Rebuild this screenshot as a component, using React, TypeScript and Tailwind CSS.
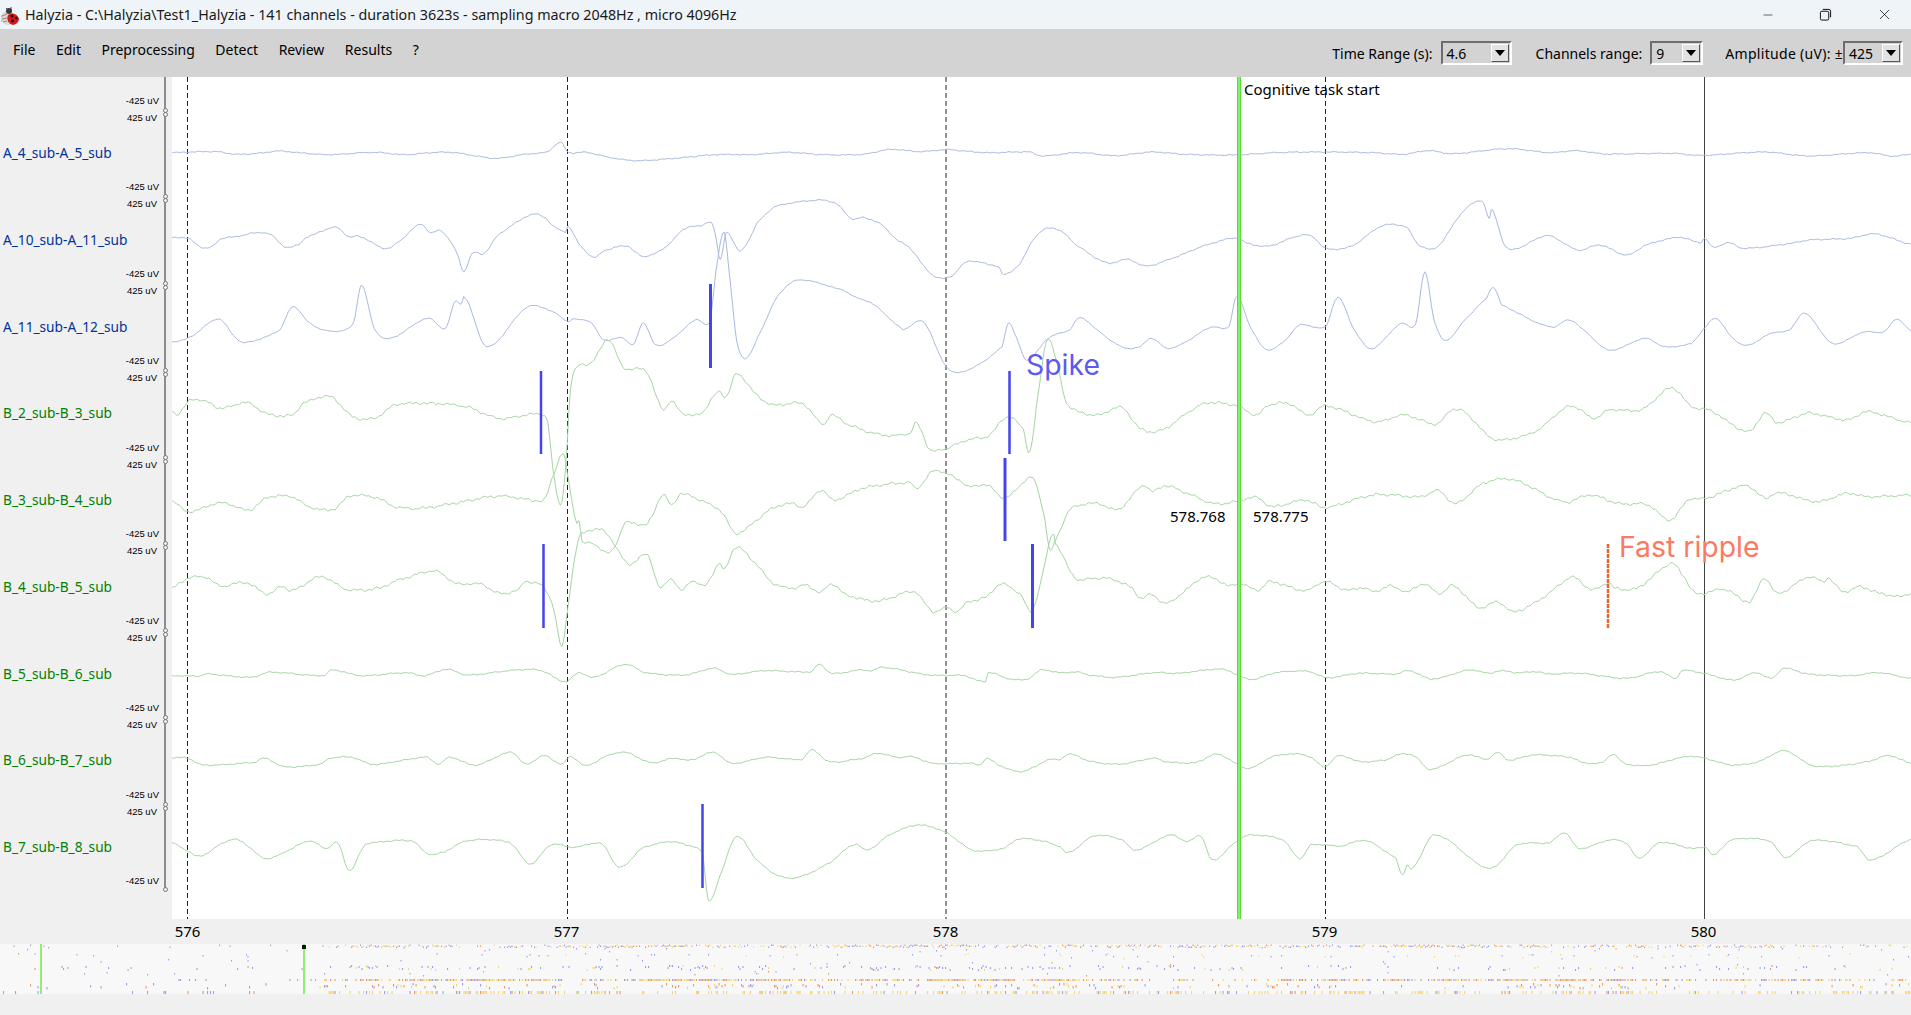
import { Minus, X } from 'lucide-react';

type Pt = [number, number];

// screen positions were read off zoomed crops, so each block of points has its own scale
const zones = {
    a: [160, 1.96, 120],
    b: [950, 1.632, 120],
    c: [160, 1.742, 500],
    d: [1050, 1.821, 500],
} as const;

function pts(zone: keyof typeof zones, s: string): Pt[] {
    const [ox, sx, oy] = zones[zone];
    return s.trim().split(/\s+/).map((p) => {
        const [x, y] = p.split(',').map(Number);
        return [ox + x / sx, oy + y / 3] as Pt;
    });
}

const blueTraces: Pt[][] = [
    [
        ...pts('a', '24,98 60,96 110,95 150,103 200,99 232,93 270,98 330,104 420,97 480,104 540,97 580,98 610,106 660,115 710,104 760,95 785,67 800,97 835,97 880,112 930,122 1000,116 1090,104 1160,104 1230,97 1300,104 1380,103 1430,88 1490,95 1540,89 1568,92'),
        ...pts('b', '60,98 130,96 150,108 210,98 270,107 330,96 380,103 465,105 530,98 610,96 690,98 740,103 780,92 820,101 910,86 980,98 1020,92 1070,102 1180,100 1225,106 1330,96 1400,108 1500,98 1540,109 1568,102'),
    ],
    [
        ...pts('a', '24,353 55,355 80,381 100,381 120,356 150,350 180,340 215,342 245,380 270,375 285,353 345,322 370,350 392,350 440,385 465,368 510,313 530,338 550,332 570,365 585,410 595,455 612,400 635,400 660,350 690,315 730,283 755,293 770,318 795,335 800,318 820,370 850,412 870,392 915,378 940,405 955,408 990,382 1030,325 1060,318 1080,306 1088,340 1098,420 1110,337 1135,392 1150,370 1170,310 1205,260 1285,241 1325,250 1355,295 1380,293 1415,315 1445,360 1470,385 1505,452 1530,475 1555,465 1568,442'),
        ...pts('b', '30,423 70,435 80,442 87,464 115,430 135,360 160,324 185,338 205,375 255,428 290,418 320,438 370,410 410,380 465,354 485,370 520,378 565,350 590,348 613,385 655,378 705,318 745,322 765,375 795,380 835,280 868,242 880,295 885,270 905,375 925,385 975,347 1025,390 1060,375 1105,405 1135,375 1190,352 1225,368 1232,355 1245,382 1270,368 1295,385 1375,370 1400,360 1470,355 1510,342 1568,372'),
    ],
    [
        ...pts('a', '24,666 60,650 115,597 150,655 170,667 235,630 260,560 290,605 320,630 358,632 380,605 395,495 420,625 450,655 525,595 560,625 578,545 590,553 598,534 640,680 720,562 775,578 800,605 810,597 845,608 870,660 905,652 928,673 947,608 970,673 1000,660 1050,600 1078,605 1090,450 1105,335 1115,450 1130,660 1148,715 1175,640 1210,530 1250,480 1340,510 1360,530 1400,555 1450,620 1462,625 1490,602 1505,625 1530,710 1548,750 1568,757'),
        ...pts('b', '50,730 85,680 95,610 105,640 125,720 160,655 195,630 212,593 240,630 270,670 290,685 310,680 328,655 355,685 385,665 425,622 455,620 468,530 490,620 515,688 545,665 570,615 613,620 633,532 660,630 688,686 735,612 760,612 775,456 790,600 808,662 840,600 875,537 887,502 900,555 980,620 1010,600 1030,625 1075,690 1135,655 1165,680 1210,670 1230,628 1250,595 1275,650 1300,676 1340,640 1370,630 1395,580 1440,670 1490,637 1525,635 1545,597 1568,632'),
    ],
];

const greenTraces: Pt[][] = [
    [
        ...pts('a', '24,875 35,882 60,840 90,845 120,865 170,848 210,882 260,885 280,850 335,830 375,888 420,895 460,855 520,850 600,860 665,895 740,882 760,905 770,1050 785,1155 795,1040 805,800 820,735 845,730 878,660 910,745 952,752 985,865 1002,845 1025,880 1060,880 1095,815 1110,830 1130,762 1170,825 1200,855 1260,852 1300,912 1315,885 1350,915 1415,945 1470,940 1483,910 1510,990 1568,970'),
        ...pts('b', '35,955 60,950 95,890 120,930 130,995 145,810 158,660 170,700 190,850 240,885 280,862 310,925 345,930 400,865 425,848 470,858 500,885 520,855 555,852 585,885 613,858 695,905 740,885 795,912 820,868 845,885 880,950 910,958 960,930 1000,870 1020,860 1050,895 1075,870 1130,868 1178,803 1210,860 1240,872 1303,935 1330,880 1350,908 1400,880 1465,900 1495,875 1568,908'),
    ],
    [
        ...pts('a', '24,1143 55,1175 120,1148 175,1170 210,1133 260,1130 290,1160 340,1168 372,1128 425,1133 460,1160 510,1165 575,1150 665,1128 740,1142 755,1135 772,1060 790,1000 798,1060 815,1200'),
        ...pts('c', '730,60 735,125 755,130 780,160 795,130 810,70 845,75'),
        ...pts('a', '960,1200 985,1125 1003,1155 1020,1122 1060,1140 1085,1160 1100,1175'),
        ...pts('c', '1003,100 1040,60'),
        ...pts('a', '1200,1165 1240,1150 1262,1160 1295,1110 1320,1140 1375,1105 1470,1088 1483,1105 1518,1052 1568,1080'),
        ...pts('b', '30,1100 60,1095 90,1133 133,1072 145,1120 155,1200'),
        ...pts('c', '1550,150'),
        ...pts('d', '8,125'),
        ...pts('b', '195,1170 240,1150 275,1168 315,1097 330,1115 350,1097 380,1115 430,1150 465,1145 500,1132 525,1160 580,1140 612,1162 690,1125 770,1130 797,1112 825,1150 870,1090 920,1080 1000,1145 1045,1125 1090,1150 1140,1155 1175,1200 1205,1140 1232,1135 1300,1097 1330,1135 1350,1118 1415,1145 1465,1120 1495,1130 1568,1125'),
    ],
    [
        ...pts('c', '20,265 48,235 80,232 105,258 150,248 188,282 212,258 230,272 280,230 325,268 380,265 415,240 480,213 515,250 560,252 590,280 625,270 635,245 668,260 685,320 700,440 712,300 725,150 735,100 775,95 815,190 850,165 870,262 890,235 908,272 925,243 950,255 975,190 982,210 1003,142 1040,195 1068,250 1105,265 1125,255 1150,277 1170,252 1195,285 1250,303 1315,275 1340,325 1352,335 1370,322 1388,335 1405,308 1440,290 1465,252 1500,285 1518,335 1535,240 1555,100'),
        ...pts('d', '10,130 45,232 80,235 115,238 150,265 165,295 185,283 210,310 240,280 275,235 300,235 325,258 345,250 380,270 400,245 465,272 500,245 540,270 570,263 590,275 620,258 650,275 680,252 710,280 735,258 780,322 815,305 845,335 900,290 952,232 985,270 1015,250 1030,265 1070,263 1130,192 1150,220 1175,280 1230,268 1275,305 1300,235 1325,280 1380,232 1410,245 1415,232 1445,275 1475,260 1500,275 1545,290 1568,280'),
    ],
    [
        ...pts('c', '20,527 70,528 80,522 160,532 190,517 285,527 300,510 350,527 430,518 460,527 500,508 535,525 620,510 665,512 705,545 730,518 755,532 810,493 845,518 915,525 965,505 995,523 1050,512 1135,515 1148,493 1170,520 1220,510 1240,512 1258,502 1340,525 1400,527 1438,545 1443,517 1475,535 1510,538 1535,510 1568,518'),
        ...pts('d', '50,516 70,525 120,532 190,518 230,520 315,508 365,538 410,518 470,514 505,533 560,520 630,522 655,512 695,537 765,510 800,520 820,512 850,518 890,515 905,522 965,520 1050,535 1110,515 1140,535 1150,512 1190,520 1245,540 1285,518 1315,535 1335,505 1380,522 1460,527 1510,518 1568,535'),
    ],
    [
        ...pts('c', '20,773 48,775 75,795 165,787 183,775 215,800 280,793 295,775 335,772 370,793 420,782 465,772 485,792 505,772 550,795 612,757 638,793 668,767 700,792 715,770 742,797 775,770 810,757 855,788 895,775 925,780 965,757 995,790 1055,772 1118,778 1136,750 1165,785 1225,775 1250,760 1285,772 1310,770 1345,790 1415,790 1428,795 1440,775 1460,795 1497,815 1525,800 1545,780 1568,778'),
        ...pts('d', '35,762 75,785 130,792 190,775 210,785 265,788 305,763 360,805 405,770 450,762 475,772 500,800 525,767 565,785 610,780 640,762 665,770 692,808 760,765 795,778 815,758 835,780 880,765 950,772 970,788 1005,788 1025,763 1045,790 1090,796 1160,770 1195,776 1240,795 1290,785 1338,752 1385,795 1430,798 1490,785 1528,767 1568,790'),
    ],
    [
        ...pts('c', '20,1028 45,1050 70,1068 115,1025 140,1023 183,1075 225,1050 260,1023 290,1045 310,1030 330,1112 355,1040 370,1028 440,1023 465,1060 490,1058 535,1022 610,1028 645,1092 680,1035 720,1042 770,1032 800,1102 840,1045 890,1025 915,1035 945,1060 955,1200 975,1130 1003,1010 1040,1080 1075,1125 1110,1132 1165,1090 1210,1033 1232,1050 1270,1005 1320,975 1370,998 1415,1050 1470,1045 1495,1017 1535,1022 1568,1040'),
        ...pts('d', '33,1058 80,1008 130,1018 155,1050 220,1005 250,1025 275,1008 295,1080 340,1025 365,1005 425,1020 455,1075 475,1035 530,1038 575,1022 630,1075 642,1125 650,1095 660,1105 700,1005 800,1105 850,1035 910,1028 938,998 962,1045 1020,1020 1050,1030 1072,1075 1110,1028 1170,1045 1195,1042 1208,1065 1240,1020 1310,1022 1340,1072 1385,1022 1470,1040 1495,1080 1568,1018'),
    ],
];

const blueNoise = [0.5, 0.6, 0.4];
const greenNoise = [1.3, 1.3, 1.3, 0.6, 0.6, 0.6];

function makeRand(seed: number) {
    let s = seed;
    return () => {
        s = (s * 1664525 + 1013904223) % 4294967296;
        return s / 4294967296;
    };
}

// smooth the hand-read points and add a bit of signal noise
function tracePath(raw: Pt[], noise: number, seed: number) {
    const rand = makeRand(seed);
    const p: Pt[] = [];
    for (const q of raw) {
        if (p.length === 0 || q[0] > p[p.length - 1][0]) p.push(q);
    }
    let d = `M${p[0][0].toFixed(1)} ${p[0][1].toFixed(1)}`;
    for (let i = 0; i < p.length - 1; i++) {
        const p0 = p[Math.max(i - 1, 0)];
        const p1 = p[i];
        const p2 = p[i + 1];
        const p3 = p[Math.min(i + 2, p.length - 1)];
        const n = Math.max(1, Math.ceil((p2[0] - p1[0]) / 1.5));
        for (let j = 1; j <= n; j++) {
            const t = j / n;
            const t2 = t * t;
            const t3 = t2 * t;
            const x = p1[0] + (p2[0] - p1[0]) * t;
            const y = 0.5 * (2 * p1[1] + (p2[1] - p0[1]) * t + (2 * p0[1] - 5 * p1[1] + 4 * p2[1] - p3[1]) * t2 + (3 * p1[1] - p0[1] - 3 * p2[1] + p3[1]) * t3);
            const wiggle = noise * (0.5 * Math.sin(x * 0.83 + seed) + 0.5 * Math.sin(x * 0.31 + seed * 2) + (rand() - 0.5) * 0.6);
            d += `L${x.toFixed(1)} ${(y + wiggle).toFixed(1)}`;
        }
    }
    return d;
}

const gridLines = [187.5, 567.5, 946, 1325.5];
const spikes = [
    [710.5, 284, 368, 3],
    [541, 371, 454, 2.5],
    [1009.5, 371, 454, 2.5],
    [1005, 458, 541, 3],
    [543.5, 544, 628, 2.5],
    [1032.5, 544, 628, 3],
    [702.5, 804, 888, 2.5],
];

const channels = [
    { name: 'A_4_sub-A_5_sub', color: 'text-[#003399]' },
    { name: 'A_10_sub-A_11_sub', color: 'text-[#003399]' },
    { name: 'A_11_sub-A_12_sub', color: 'text-[#003399]' },
    { name: 'B_2_sub-B_3_sub', color: 'text-[#008000]' },
    { name: 'B_3_sub-B_4_sub', color: 'text-[#008000]' },
    { name: 'B_4_sub-B_5_sub', color: 'text-[#008000]' },
    { name: 'B_5_sub-B_6_sub', color: 'text-[#008000]' },
    { name: 'B_6_sub-B_7_sub', color: 'text-[#008000]' },
    { name: 'B_7_sub-B_8_sub', color: 'text-[#008000]' },
];

type DotRow = { y: number; spread: number; h: number; density: (x: number) => number; mix: [number, number] };

// overview strip: one row of detections per category, density read from the picture
function overviewDots() {
    const rand = makeRand(77);
    const out = { purple: '', orange: '', yellow: '' };
    const rows: DotRow[] = [
        { y: 945.5, spread: 1, h: 1.4, density: (x) => (x < 310 ? 0.07 : x < 350 ? 0.25 : x < 1660 ? 0.85 : 0.6), mix: [0.4, 0.22] },
        { y: 949, spread: 2, h: 1.4, density: (x) => (x < 360 ? 0.015 : 0.03), mix: [0.8, 0.05] },
        { y: 955, spread: 2, h: 1.4, density: (x) => (x < 480 ? 0.035 : 0.07), mix: [0.55, 0.05] },
        { y: 961, spread: 3, h: 1.4, density: (x) => (x < 500 ? 0.025 : 0.02), mix: [0.9, 0.05] },
        { y: 967, spread: 2, h: 2, density: (x) => (x < 310 ? 0.06 : x < 350 ? 0.2 : x < 1150 ? 0.32 : 0.18), mix: [0.72, 0.03] },
        { y: 973, spread: 2, h: 1.4, density: (x) => (x < 500 ? 0.02 : 0.02), mix: [0.6, 0.3] },
        { y: 979, spread: 0, h: 2, density: (x) => (x < 280 ? 0.04 : x < 360 ? 0.3 : x < 1150 ? 0.92 : x < 1280 ? 0.2 : x < 1670 ? 0.88 : 0.55), mix: [0.2, 0.42] },
        { y: 985, spread: 2, h: 2.5, density: (x) => (x < 310 ? 0.07 : x < 1150 ? 0.3 : x < 1680 ? 0.22 : 0.12), mix: [0.38, 0.32] },
        { y: 991, spread: 0, h: 3, density: (x) => (x < 320 ? 0.07 : 0.42), mix: [0.16, 0.08] },
    ];
    for (const r of rows) {
        for (let x = 0; x < 1911; x += 1.5) {
            // detections come in bursts, not evenly
            const burst = 0.75 + 0.25 * Math.sin(x * 0.11 + r.y) + 0.2 * Math.sin(x * 0.023 + r.y * 2);
            if (rand() > r.density(x) * burst) continue;
            const c = rand();
            // the start of the recording has almost only purple marks
            const purple = x < 310 ? 0.8 : r.mix[0];
            const orange = x < 310 ? 0.2 : r.mix[1];
            const key = c < purple ? 'purple' : c < purple + orange ? 'orange' : 'yellow';
            const y = r.y + Math.round(rand() * r.spread * 2) - r.spread;
            out[key] += `M${x.toFixed(1)} ${y}h1.1v${r.h}h-1.1z`;
        }
    }
    return out;
}

function Ladybug() {
    return (
        <svg viewBox="0 0 20 20" className="w-5 h-5 shrink-0">
            <path d="M6 3 L8 5 M11 2 L11 5 M1 11 L3 12 M1 16 L3 15" stroke="#555" strokeWidth="1" />
            <circle cx="8" cy="13" r="7" fill="#d8d8d8" />
            <path d="M2 11 L7 9 M2 14 L7 13 M3 17 L7 16" stroke="#b08080" strokeWidth="1" />
            <circle cx="9" cy="6" r="3" fill="#3a3a3a" />
            <path d="M8 10 A 7 7 0 0 1 19 14 A 6.5 6.5 0 0 1 13 20 A 7 7 0 0 1 8 10 Z" fill="#d81818" />
            <circle cx="12" cy="11" r="1.4" fill="#111" />
            <circle cx="16.5" cy="13" r="1.3" fill="#111" />
            <circle cx="12.5" cy="16" r="1.4" fill="#111" />
        </svg>
    );
}

function Combo({ value, width }: { value: string; width: string }) {
    return (
        <div className={`${width} h-6 border-2 border-t-[#6e6e6e] border-l-[#6e6e6e] border-r-white border-b-white flex items-center justify-between pl-1 pr-px`}>
            <span className="text-[14px] text-black">{value}</span>
            <span className="w-[18px] h-[18px] bg-[#e2e2e2] border border-t-white border-l-white border-r-[#555] border-b-[#555] flex items-center justify-center">
                <span className="w-0 h-0 border-x-[5px] border-x-transparent border-t-[6px] border-t-black" />
            </span>
        </div>
    );
}

export default function App() {
    const dots = overviewDots();
    return (
        <div className="w-full h-[1015px] overflow-hidden flex flex-col bg-[#f0f0f0] text-black font-['Noto_Sans',sans-serif]">
            {/* title bar */}
            <div className="h-[29px] shrink-0 bg-[#eff4f9] flex items-center justify-between">
                <div className="flex items-center gap-[5px]">
                    <Ladybug />
                    <span className="text-[14.3px] text-[#1a1a1a] whitespace-nowrap">Halyzia - C:\Halyzia\Test1_Halyzia - 141 channels - duration 3623s - sampling macro 2048Hz , micro 4096Hz</span>
                </div>
                <div className="flex items-center gap-[44px] pr-[18px] text-black">
                    <Minus size={14} strokeWidth={1} />
                    <svg viewBox="0 0 14 14" className="w-[13px] h-[13px]" fill="none" stroke="currentColor" strokeWidth="1">
                        <rect x="1.5" y="3.5" width="9" height="9.5" rx="1.5" />
                        <path d="M4 1.5 h6.5 a2 2 0 0 1 2 2 v6.5" />
                    </svg>
                    <X size={17} strokeWidth={1} />
                </div>
            </div>

            {/* menu and range controls */}
            <div className="h-12 shrink-0 bg-[#d3d3d3] flex items-center justify-between pl-[13px] pr-2">
                <div className="flex items-center gap-[20.5px] text-[14px] -mt-[7px]">
                    <span>File</span>
                    <span>Edit</span>
                    <span>Preprocessing</span>
                    <span>Detect</span>
                    <span>Review</span>
                    <span>Results</span>
                    <span>?</span>
                </div>
                <div className="flex items-center text-[14px]">
                    <span className="mr-2">Time Range (s):</span>
                    <Combo value="4.6" width="w-[71px]" />
                    <span className="ml-6 mr-2">Channels range:</span>
                    <Combo value="9" width="w-[53px]" />
                    <span className="ml-[22px] tracking-[0.3px]">Amplitude (uV): ±</span>
                    <Combo value="425" width="w-[60px]" />
                </div>
            </div>

            {/* channel labels and traces */}
            <div className="h-[842px] shrink-0 flex">
                <div className="w-[172px] shrink-0 pr-[6px]">
                    <div className="h-[812px] border-r-2 border-[#8c8c8c] pt-[14.5px] font-['Liberation_Sans',sans-serif]">
                        {channels.map((c) => (
                            <div key={c.name} className="relative h-[86.75px]">
                                <div className="text-[9.5px] leading-[17px] text-right pr-[5px]">-425 uV</div>
                                <div className="text-[9.5px] leading-[17px] text-right pr-[7px]">425 uV</div>
                                <div className={`mt-[17.5px] pl-[3px] text-[13.7px] leading-[19px] font-['Noto_Sans',sans-serif] whitespace-nowrap ${c.color}`}>{c.name}</div>
                                <span className="absolute right-[-4px] top-[16px] w-[5px] h-[5px] rounded-full border border-[#777] bg-[#f0f0f0]" />
                                <span className="absolute right-[-4px] top-[20px] w-[5px] h-[5px] rounded-full border border-[#777] bg-[#f0f0f0]" />
                            </div>
                        ))}
                        <div className="relative text-[9.5px] leading-[17px] text-right pr-[5px]">
                            -425 uV
                            <span className="absolute right-[-4px] top-[15px] w-[5px] h-[5px] rounded-full border border-[#777] bg-[#f0f0f0]" />
                        </div>
                    </div>
                </div>

                <div className="relative flex-1 bg-white overflow-hidden">
                    <svg viewBox="172 77 1739 842" className="w-full h-full block">
                        {gridLines.map((x) => (
                            <line key={x} x1={x} x2={x} y1={77} y2={919} stroke="#222" strokeWidth="1" strokeDasharray="5 3" />
                        ))}
                        <line x1={1704.5} x2={1704.5} y1={77} y2={919} stroke="#111" strokeWidth="0.8" />
                        {blueTraces.map((t, i) => (
                            <path key={i} d={tracePath(t, blueNoise[i], i + 3)} fill="none" stroke="#a8b8e0" strokeWidth="1" />
                        ))}
                        {greenTraces.map((t, i) => (
                            <path key={i} d={tracePath(t, greenNoise[i], i + 11)} fill="none" stroke="#a5d4a2" strokeWidth="1" />
                        ))}
                        <rect x={1237} y={77} width={4} height={842} fill="#55e030" />
                        <rect x={1238.5} y={77} width={1} height={842} fill="#c4f5b4" />
                        {spikes.map(([x, y1, y2, w]) => (
                            <line key={`${x}-${y1}`} x1={x} x2={x} y1={y1} y2={y2} stroke="#4444ee" strokeWidth={w} />
                        ))}
                        <line x1={1608} x2={1608} y1={544} y2={628} stroke="#e8652e" strokeWidth="2.5" strokeDasharray="4 1" />
                    </svg>

                    <span className="absolute left-[1072px] top-[1px] text-[15px] whitespace-nowrap">Cognitive task start</span>
                    <span className="absolute left-[998px] top-[428px] text-[15px]">578.768</span>
                    <span className="absolute left-[1081px] top-[428px] text-[15px]">578.775</span>
                    <span className="absolute left-[854px] top-[267px] text-[28.4px] font-['Inter',sans-serif] text-[#5b5bf2]">Spike</span>
                    <span className="absolute left-[1447px] top-[449px] text-[28.4px] font-['Inter',sans-serif] text-[#fb7a62] whitespace-nowrap">Fast ripple</span>
                </div>
            </div>

            {/* time axis */}
            <div className="h-[25px] shrink-0 flex items-center pl-[167.5px] gap-[339px] text-[15px]">
                {[576, 577, 578, 579, 580].map((t) => (
                    <span key={t} className="w-10 text-center">{t}</span>
                ))}
            </div>

            {/* whole recording overview */}
            <div className="h-[50px] shrink-0 bg-[#f8f8f8]">
                <svg viewBox="0 944 1911 50" className="w-full h-full block">
                    <path d={dots.purple} fill="#9d9df2" />
                    <path d={dots.orange} fill="#ee9a60" />
                    <path d={dots.yellow} fill="#f7d568" />
                    <rect x={40} y={944} width={2} height={50} fill="#90ee70" />
                    <rect x={303} y={944} width={2} height={50} fill="#90ee70" />
                    <rect x={302} y={945} width={4} height={4} fill="#111" />
                </svg>
            </div>
            <div className="flex-1 bg-[#f0f0f0]" />
        </div>
    );
}
